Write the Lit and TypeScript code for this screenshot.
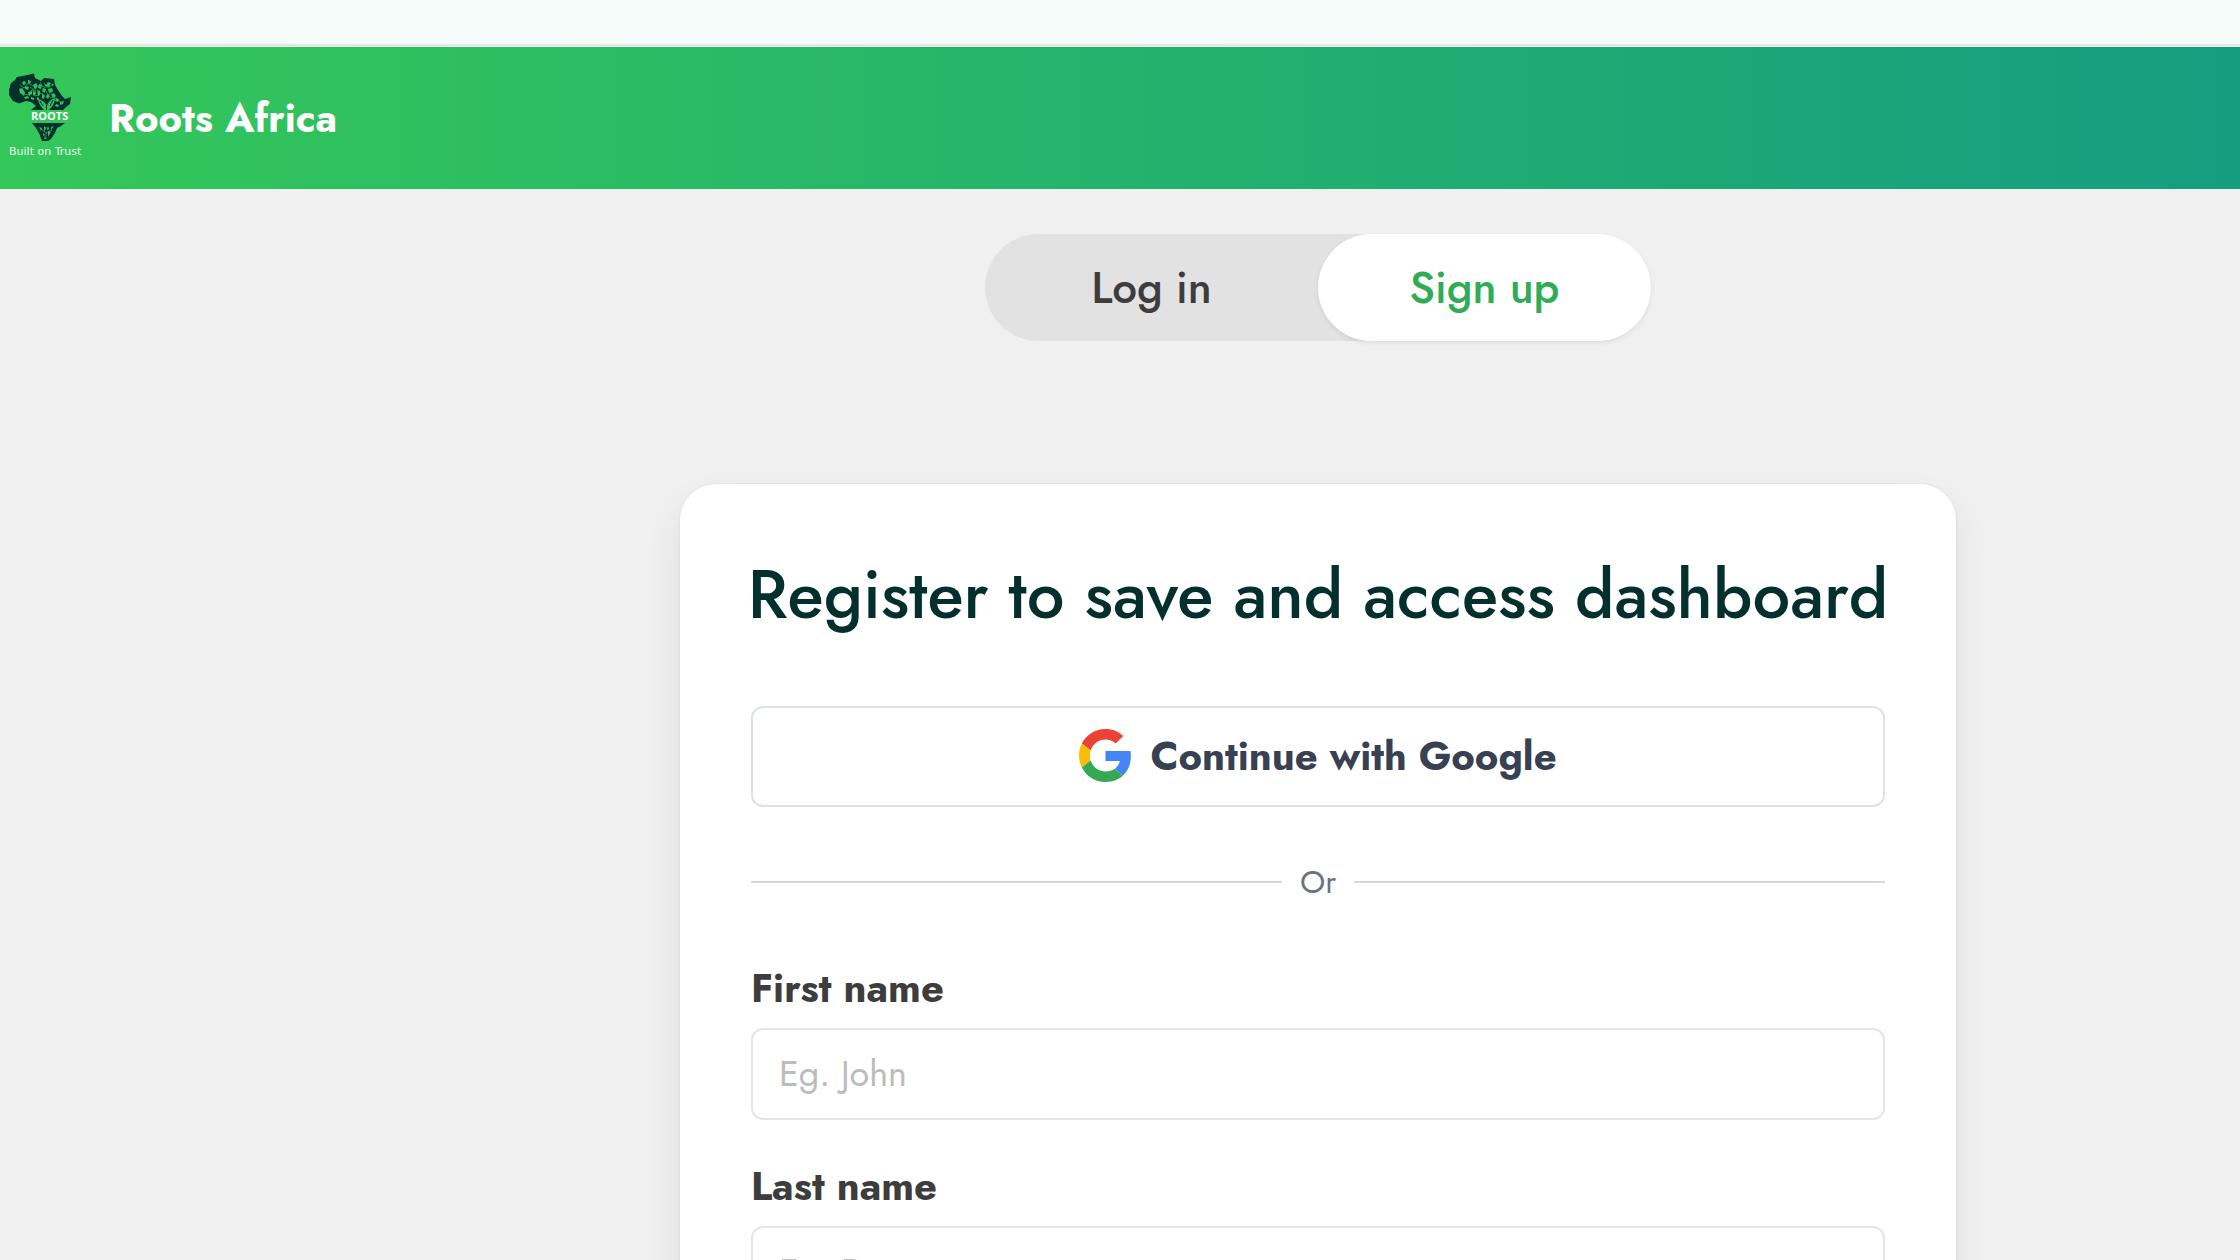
import { LitElement, html, css, svg } from "lit";
import { customElement, state } from "lit/decorators.js";

const africaLogo = svg`
  <path fill="#03302d" d="M9 17 L11 10 L15 7 L17 4 L27 2 L34 0.5 L35 5 L41 8 L44 5 L54 6 L55 12 L58 17 L62 23 L65 26 L71 24 L70 31 L65 35 L63 37 L31 37 L36 33 L31 29 L26 28 L19 30.5 L13 28 L9 22 Z"/>
  <path fill="#03302d" d="M32 50 L65 50 L61 53 L57 55 L55 60 L51 66 L48 68 L42 68 L39 60 L36 55 Z"/>
  <g fill="#30bf5c">
    <path d="M22 9l3-1 1 3-3 1zM28 7l3 1-1 3-2-1zM19 16l3-1 3 4-1 4-4-3zM25 13l4 1-1 3-3-1zM28 19l4-1v3l-3 2zM24 24l4-1 1 2-4 1zM33 12l3-2 2 3-3 4zM39 11l3 1-1 4-3-1zM33 18l3 1-1 4-2-1zM37 17l3 1v4l-2 1zM44 9l2 3 2-3 3 1-2 4-4-1zM43 15l3 1-1 4-3-2zM48 16l4-1 1 3-4 2zM51 21l3-1 2 3-3 2zM42 21l3 1-1 4-2-1zM47 21l3 2-2 3-2-2zM56 25l3 1-1 3-3-1zM60 29l4-1-1 3-3 1zM37 24l2 1v2h-2zM31 24l3 1v2l-3-1zM56 31l3 1-1 2-3-1zM52 10l2 2-2 1z"/>
    <path d="M38 26c4 1 7 3 9 7c1-4 4-7 8-8c0 5-3 9-6 12h-5c-3-3-5-6-6-11z"/>
    <path d="M39 54l3 1-1 3zM44 53l2 2-2 4zM48 53l1 3-2 1zM51 54l3-1-3 4zM43 60l2 2-2 1zM48 58l3 1-3 5zM45 63l1 3h-2z"/>
  </g>
  <path fill="none" stroke="#30bf5c" stroke-width="0.7" d="M20 12l4 3 4-5 5 3M23 21l5 1 4-5 4 1M30 14l4 3M40 9l3 5 6 0 3-2M46 18l2 4 5-4M40 20l3 1M54 24l5 4 4 2M35 23l4-1M50 25l5-2M41 56l5 4 6-3M44 54l5 2M46 60v6"/>
  <path fill="none" stroke="#03302d" stroke-width="1" d="M46.500 37V32M43 33l-3-5M50 33l3-6"/>
`;

@customElement("app-root")
export class AppRoot extends LitElement {
  static styles = css`
    :host {
      display: block;
      height: 100vh;
      overflow: hidden;
      background: #f0f0f0;
      color: #3d3d3d;
      font-family: Jost, Lato, "Liberation Sans", sans-serif;
      font-size: 40px;
    }
    * { box-sizing: border-box; }
    .strip {
      height: 46px;
      background: #f5fbf9;
      border-bottom: 2px solid #dfe9e6;
    }
    .header {
      display: flex;
      align-items: center;
      gap: 23px;
      height: 142px;
      margin-top: 1px;
      background: linear-gradient(90deg, #34c759, #169d80);
      color: #fff;
    }
    .logo { width: 86px; height: 90px; flex: none; }
    .logo-name { font: 700 11px "Open Sans", sans-serif; fill: #fff; }
    .logo-motto { font: 400 11px "DejaVu Sans", sans-serif; fill: #e9f9ee; }
    .brand { font-weight: 700; color: inherit; text-decoration: none; }
    .main {
      display: flex;
      flex-direction: column;
      align-items: center;
      gap: 143px;
      padding: 45px 0 0 396px;
    }
    .tabs {
      display: grid;
      grid-template-columns: 1fr 1fr;
      width: 100%;
      max-width: 666px;
      border-radius: 54px;
      background: #e2e2e2;
    }
    .tab {
      height: 107px;
      border: 0;
      border-radius: 54px;
      background: none;
      color: #3d3d3d;
      font: inherit;
      font-size: 44px;
      font-weight: 500;
    }
    .tab.active {
      background: #fff;
      color: #2fac55;
      box-shadow: 0 2px 5px rgba(0, 0, 0, 0.08);
    }
    .card {
      display: flex;
      flex-direction: column;
      width: 100%;
      max-width: 1276px;
      padding: 71px;
      border-radius: 36px;
      background: #fff;
      box-shadow: 0 0 3px rgba(0, 0, 0, 0.08), 0 18px 36px rgba(0, 0, 0, 0.08);
    }
    .title {
      align-self: center;
      margin: 0 0 71px;
      color: #03302d;
      font-size: 67px;
      line-height: 80px;
      font-weight: 500;
      white-space: nowrap;
    }
    .google {
      display: flex;
      align-items: center;
      justify-content: center;
      gap: 18px;
      height: 101px;
      padding: 0 0 2px;
      border: 2px solid #dde1e8;
      border-radius: 12px;
      background: #fff;
      color: #374151;
      font: inherit;
      font-weight: 700;
    }
    .g-mark { width: 53px; height: 53px; }
    .divider {
      display: flex;
      align-items: center;
      gap: 18px;
      margin: 51px 0 52px;
      color: #6b7280;
      font-size: 32px;
      line-height: 48px;
    }
    .rule { flex: 1; height: 2px; background: #d4d9df; }
    .field { display: flex; flex-direction: column; gap: 10px; margin-bottom: 36px; }
    .label { font-weight: 700; line-height: 60px; }
    .input {
      width: 100%;
      height: 92px;
      padding: 0 26px 3px;
      border: 2px solid #e5e5e5;
      border-radius: 12px;
      background: #fff;
      color: #3d3d3d;
      font: inherit;
      font-size: 36px;
    }
    .input::placeholder { color: #bcbcbc; opacity: 1; }
  `;

  @state() private mode = "Sign up";

  private fields = [
    { id: "first-name", label: "First name", hint: "Eg. John" },
    { id: "last-name", label: "Last name", hint: "Eg. Doe" },
  ];

  render() {
    return html`
      <div class="strip"></div>
      <header class="header">
        <svg class="logo" viewBox="0 0 86 90" aria-hidden="true">
          ${africaLogo}
          <text class="logo-name" x="31" y="47">ROOTS</text>
          <text class="logo-motto" x="9" y="82">Built on Trust</text>
        </svg>
        <a class="brand" href="#">Roots Africa</a>
      </header>
      <main class="main">
        <div class="tabs">
          ${["Log in", "Sign up"].map(
            (name) => html`<button
              type="button"
              class="tab ${this.mode === name ? "active" : ""}"
              @click=${() => (this.mode = name)}
            >${name}</button>`,
          )}
        </div>
        <form class="card">
          <h1 class="title">Register to save and access dashboard</h1>
          <button class="google" type="button">
            <svg class="g-mark" viewBox="0 0 48 48" aria-hidden="true">
              <path fill="#EA4335" d="M24 9.5c3.54 0 6.71 1.22 9.21 3.6l6.85-6.85C35.9 2.38 30.47 0 24 0 14.62 0 6.51 5.38 2.56 13.22l7.98 6.19C12.43 13.72 17.74 9.5 24 9.5z"/>
              <path fill="#4285F4" d="M46.98 24.55c0-1.57-.15-3.09-.38-4.55H24v9.02h12.94c-.58 2.96-2.26 5.48-4.78 7.18l7.73 6c4.51-4.18 7.09-10.36 7.09-17.65z"/>
              <path fill="#FBBC05" d="M10.53 28.59c-.48-1.45-.76-2.99-.76-4.59s.27-3.14.76-4.59l-7.98-6.19C.92 16.46 0 20.12 0 24c0 3.88.92 7.54 2.56 10.78l7.97-6.19z"/>
              <path fill="#34A853" d="M24 48c6.48 0 11.93-2.13 15.89-5.81l-7.73-6c-2.15 1.45-4.92 2.3-8.16 2.3-6.26 0-11.57-4.22-13.47-9.91l-7.98 6.19C6.51 42.62 14.62 48 24 48z"/>
            </svg>
            Continue with Google
          </button>
          <div class="divider"><span class="rule"></span>Or<span class="rule"></span></div>
          ${this.fields.map(
            (f) => html`<div class="field">
              <label class="label" for=${f.id}>${f.label}</label>
              <input class="input" id=${f.id} type="text" placeholder=${f.hint} />
            </div>`,
          )}
        </form>
      </main>
    `;
  }
}
